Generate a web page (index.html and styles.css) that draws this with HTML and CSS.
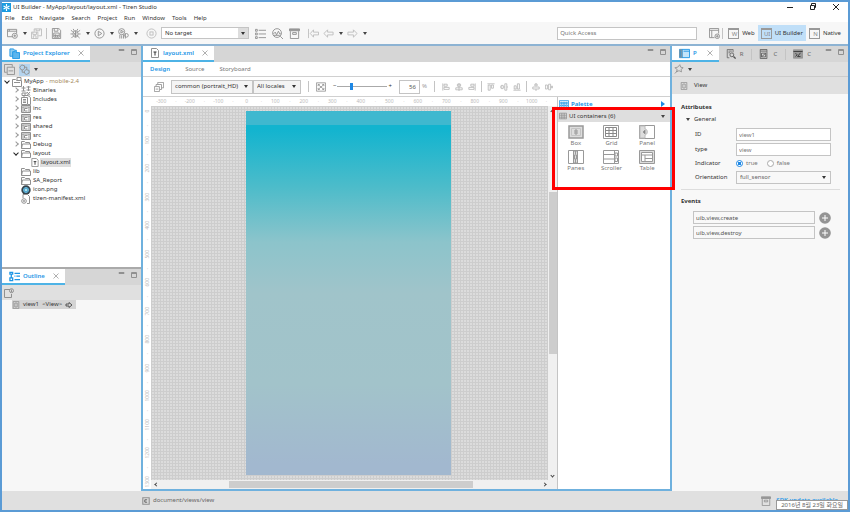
FILE: index.html
```html
<!DOCTYPE html>
<html lang="en">
<head>
<meta charset="utf-8">
<title>UI Builder - MyApp/layout/layout.xml - Tizen Studio</title>
<link rel="stylesheet" href="styles.css">
</head>
<body>
<svg class="sprite" aria-hidden="true">
  <symbol id="logo" viewBox="0 0 9 9"><rect width="9" height="9" fill="#1a9be0"/><path d="M4.5 1v2M4.500 6v2M1.500 3l2 1M5.500 5l2 1M1.500 6l2-1M5.500 4l2-1" stroke="#fff" stroke-width="1.200"/><circle cx="4.500" cy="4.500" r="1.300" fill="#fff"/></symbol>
  <symbol id="new" viewBox="0 0 12 12"><path d="M10.500 6V1.500H.5v8h5M.5 3.500h10M2.500 1.500v2"/><circle cx="8.500" cy="8.500" r="2.800"/><path d="M8.500 7v3M7 8.500h3"/></symbol>
  <symbol id="saveall" viewBox="0 0 12 12"><path d="M.5 4.500h7v7h-7zM2 4.500V7h4V4.500M2.500 11.500v-3h3v3M3.500 4V1h8v7.500H8M5.500 1v2h4V1"/></symbol>
  <symbol id="save" viewBox="0 0 12 12"><path d="M1.500.5h7l2 2v9h-9zM3 5.500h6V10H3zM3.500 .5v3h4v-3M3 8h6M5 10V7M7 10V8"/></symbol>
  <symbol id="bug" viewBox="0 0 12 12"><ellipse cx="6" cy="6.500" rx="2.800" ry="3.600"/><path d="M3 4 1 2.500M3 6.500H.5M3.500 9l-2 2M9 4l2-1.500M9 6.500h2.500M8.500 9l2 2M4.500 3 3.500 1M7.500 3l1-2M3.500 5l5 4M4 8.500 8 4.500M6 3v7"/></symbol>
  <symbol id="run" viewBox="0 0 12 12"><circle cx="6" cy="6" r="5"/><path d="M4.700 3.500v5L8.500 6z"/></symbol>
  <symbol id="profile" viewBox="0 0 12 12"><circle cx="4" cy="4" r="3.300"/><path d="M3.200 2.500v3L6 4zM2 7.500v4M4 8v3.500M6 7v4.500M8 6v5.500"/><circle cx="9.200" cy="8" r="2"/></symbol>
  <symbol id="stop" viewBox="0 0 12 12"><circle cx="6" cy="6" r="5"/><rect x="4.300" y="4.300" width="3.400" height="3.400"/></symbol>
  <symbol id="list" viewBox="0 0 12 12"><path d="M.5 1.500h2v2h-2zM.5 5.500h2v2h-2zM.5 9.500h2v2h-2zM4 2.500h8M4 6.500h8M4 10.500h8"/></symbol>
  <symbol id="analyze" viewBox="0 0 12 12"><circle cx="5.500" cy="5.500" r="4.800"/><path d="m9 9 3 3M1.500 6.500l2-2 1.500 3 2-4 1.500 3H10M1.500 8h7"/></symbol>
  <symbol id="archive" viewBox="0 0 12 12"><path d="M.5 1h11v2H.5z" fill="#999"/><path d="M1.500 3.500v8h9v-8M4 5h4v2H4z"/></symbol>
  <symbol id="left" viewBox="0 0 12 12"><path d="m1 6 4-4v2.500h6v3H5V10z"/></symbol>
  <symbol id="leftbar" viewBox="0 0 12 12"><path d="M.5 1v10M2.500 6l3.500-4v2.500h5.500v3H6V10z"/></symbol>
  <symbol id="right" viewBox="0 0 12 12"><path d="M11 6 7 2v2.500H1v3h6V10z"/></symbol>
  <symbol id="persp" viewBox="0 0 12 12"><path d="M6 10.500H.5v-10h10V6M.5 2.500h10M3 2.500v8"/><circle cx="9" cy="9" r="2.500"/><path d="M9 7.500v3M7.500 9h3"/></symbol>
  <symbol id="explorer" viewBox="0 0 12 12"><path d="M1 1h4l1 1.500h2V9H1z" fill="#8ecbf0" stroke="#1e96e6"/><path d="M4 4h3l1 1h3.500v6.500H4z" fill="#5bb5ee" stroke="#1e96e6"/></symbol>
  <symbol id="close" viewBox="0 0 8 8"><path d="m1.500 1.500 5 5M6.500 1.500l-5 5"/></symbol>
  <symbol id="min" viewBox="0 0 8 8"><path d="M1 1.500h5v1H1z"/></symbol>
  <symbol id="max" viewBox="0 0 8 8"><path d="M1.500 1.500h5v5h-5zM1.500 2.500h5"/></symbol>
  <symbol id="collapse" viewBox="0 0 12 12"><path d="M3 9H.5V.5H9V3M3.500 3.500h8v8h-8zM5 7.500h5"/></symbol>
  <symbol id="link" viewBox="0 0 12 12"><path d="M2 6 .8 3.500 3 1l3 1v3L4 6.500zM3.500 6.500v2.500H6M6 8l1.500-2L11 7v3l-3 1.500L6 10zM8.500 6V3.500H6"/></symbol>
  <symbol id="project" viewBox="0 0 10 10"><path d="M.5 9.500v-7h3l1 1h5v6zM5 3V.5h4V3M2 5.500h6"/></symbol>
  <symbol id="bin" viewBox="0 0 10 10"><path d="M.5 2h4M2.500 0v5M5.500 1h4M7.500 0v5M5.500 4h4M.5 5h4M1 7h3v2.500H1zM6 6l3 3.500M9 6 6 9.500M4 7h2"/></symbol>
  <symbol id="inc" viewBox="0 0 10 10"><path d="M3 2V.5h4l2.500 2v7H7M.5 2.500h6v7h-6zM2 4.500h3M2 6h3M2 7.500h3"/></symbol>
  <symbol id="cfold" viewBox="0 0 10 10"><path d="M.5 1.500h9v7h-9zM.5 3h9M6.500 4.500h-3v2.500h3M2 3v5M8 3v5"/></symbol>
  <symbol id="folder" viewBox="0 0 10 10"><path d="M.5 8.500v-7h3l1 1h4V4M.5 8.500l1-4.500h8v4.500z"/></symbol>
  <symbol id="tfile" viewBox="0 0 10 10"><path d="M1.500.5h5l2 2v7h-7z"/><path d="M3.500 4h3M5 4v3.500" stroke="#333"/></symbol>
  <symbol id="globe" viewBox="0 0 10 10"><circle cx="5" cy="5" r="4.700" fill="#35434c" stroke="none"/><circle cx="5" cy="5" r="2.500" fill="#2585b5" stroke="#6bbce0"/><path d="M3.500 5h3M5 3.500v3" stroke="#dff"/></symbol>
  <symbol id="manifest" viewBox="0 0 10 10"><path d="M2 4V.5h4.500l2 2v7H6"/><circle cx="3" cy="7" r="2.300"/><circle cx="3" cy="7" r=".6"/></symbol>
  <symbol id="outline" viewBox="0 0 12 12"><path d="M1 1.500h3v2H1zM1 7.500h3v3H1zM2.500 4v3M6 2.500h6M6 5.500h1M8 5.500h4M6 9.500h6" stroke="#1e96e6" stroke-width="1.400"/></symbol>
  <symbol id="newview" viewBox="0 0 10 10"><path d="M6 1.500H.5v8h7V6"/><circle cx="7.500" cy="2.700" r="2"/><path d="M7.500 1.500v2.500"/></symbol>
  <symbol id="view" viewBox="0 0 10 10"><path d="M1.500.5h7v9h-7zM3.500 2.500h3v5h-3z"/></symbol>
  <symbol id="arrow" viewBox="0 0 8 8"><path d="M1 3h3V1.500L7 4 4 6.500V5H1z" stroke="#555"/></symbol>
  <symbol id="layers" viewBox="0 0 12 12"><path d="M.5 5.500h6v6h-6zM2.500 5V3h6.500v6H7M4.500 2.500V.5h7V7H9.500M2 8.500h3"/></symbol>
  <symbol id="fit" viewBox="0 0 12 12"><path d="M.5 1h11v10H.5zM2.500 5V3h2M2.500 3l7 6M9.500 7v2h-2M9.500 5V3h-2M9.500 3l-7 6M2.500 7v2h2"/></symbol>
  <symbol id="al" viewBox="0 0 10 10"><path d="M1 .5v9M2.500 1.500h4v2.500h-4zM2.500 5.500H9V8H2.500z"/></symbol>
  <symbol id="ac" viewBox="0 0 10 10"><path d="M3 1.500h4v2.500H3zM1 6h8v2.500H1zM5 0v10"/></symbol>
  <symbol id="ar" viewBox="0 0 10 10"><path d="M9 .5v9M3.500 1.500h4v2.500h-4zM1 5.500h6.500V8H1z"/></symbol>
  <symbol id="at" viewBox="0 0 10 10"><path d="M.5 1h9M1.500 2.500H4V9H1.500zM5.500 2.500H8v4H5.500z"/></symbol>
  <symbol id="am" viewBox="0 0 10 10"><path d="M0 5h1.500M4 5h2M8.500 5H10M1.500 3H4v4H1.500zM6 1h2.500v8H6z"/></symbol>
  <symbol id="ab" viewBox="0 0 10 10"><path d="M.5 9h9M1.500 3.500H4v4H1.500zM5.500 1H8v6.500H5.500z"/></symbol>
  <symbol id="dv" viewBox="0 0 10 10"><path d="M5 0v1.500M3.500 1.500h3v2h-3zM1 5h8v2.500H1zM5 7.500V10"/></symbol>
  <symbol id="dh" viewBox="0 0 10 10"><path d="M.5 2.500H3v5H.5zM4.500 1.500H7v7H4.500zM8 4h1.500v2H8z"/></symbol>
  <symbol id="palette" viewBox="0 0 12 10"><path d="M.5 1h11v8H.5zM2 3h2v1.500H2zM5 3h2v1.500H5zM8 3h2v1.500H8zM2 6h2v1.500H2zM5 6h2v1.500H5zM8 6h2v1.500H8z" stroke="#1e96e6"/></symbol>
  <symbol id="grid" viewBox="0 0 10 10"><path d="M.5 1.500h9v7h-9zM.5 4h9M.5 6.500h9M3.500 1.500v7M6.500 1.500v7"/></symbol>
  <symbol id="w-box" viewBox="0 0 16 14"><path d="M1 1h14v12H1z" fill="#ddd" stroke-width="1.500"/><path d="M3.500 3.500h9v7h-9z" stroke="#c4c4c4"/><path d="M7 5h2v4H7zM7 7h2"/></symbol>
  <symbol id="w-grid" viewBox="0 0 16 14"><path d="M.5.500h15v13H.5z"/><path d="M2.500 2.500h11v9h-11zM6 2.500v9M10 2.500v9M2.500 5.500h11M2.500 8.500h11" stroke="#888"/></symbol>
  <symbol id="w-panel" viewBox="0 0 16 14"><path d="M.5.500h15v13H.5z"/><path d="M1 1h5v3c3 0 3 5.500 0 6v3H1z" fill="#ddd" stroke="#bbb"/><path d="M6 5l-2 2 2 2z" fill="#777"/></symbol>
  <symbol id="w-panes" viewBox="0 0 16 14"><path d="M.5.500h15v13H.5z"/><path d="M5.500 1h4v12h-4z" fill="#ddd"/><path d="M7.500 1v3.500M6.500 5h2v4h-2zM7.500 9v4"/></symbol>
  <symbol id="w-scroller" viewBox="0 0 16 14"><path d="M.5.500h15v13H.5zM.5 4.500h10.500M.5 9h10.500M11.500 1v12"/><path d="M12 3h2.500v3H12zM12 8h2.500v3.500H12z"/></symbol>
  <symbol id="w-table" viewBox="0 0 16 14"><path d="M.5.500h15v13H.5z" fill="#ddd"/><path d="M2.500 2.500h11v9h-11z" fill="#fff"/><path d="M2.500 5h11M6 5v6.500M6 8.500h7.500"/></symbol>
  <symbol id="prop" viewBox="0 0 12 12"><path d="M.5 1.500h11v9H.5zM3.500 1.500v9M5 3.500h6" stroke="#1e96e6" fill="#c3e4fa"/><path d="M1 2h2v8H1z" fill="#1e96e6"/></symbol>
  <symbol id="search" viewBox="0 0 12 12"><path d="M4 10.500H1.500v-10h7V4M3 2.500h4M3 4.500h2" stroke="#666"/><circle cx="7" cy="7" r="2.300" stroke="#555"/><path d="m9 9 2.500 2.500" stroke="#555" stroke-width="1.600"/></symbol>
  <symbol id="check" viewBox="0 0 12 12"><path d="M1.500.5h8v11h-8zM2 2.500h7M3 9.500l5-4.500M3 5h5v4.500H3z" stroke="#555"/></symbol>
  <symbol id="console" viewBox="0 0 12 12"><path d="M.5 1h11v10H.5z" fill="#999"/><path d="M.5 3h11M3 5l2 2-2 2M9 4.500 5.500 9H9" stroke="#333"/></symbol>
  <symbol id="pin" viewBox="0 0 12 12"><path d="m7 .8 1 3 3 .7-2.500 2 .5 3-3-1.500L3 9.500l.8-3L1 4.500l3.500-.7zM4 8l-3 3.500"/></symbol>
  <symbol id="plus" viewBox="0 0 12 12"><circle cx="6" cy="6" r="5.800" fill="#949494" stroke="none"/><path d="M6 3v6M3 6h6" stroke="#fff"/></symbol>
  <symbol id="cbox" viewBox="0 0 10 10"><path d="M1 1h8v8H1z" stroke-width="1.400"/><path d="M6.500 3.500h-3v3h3" stroke="#444"/></symbol>
</svg>

<div class="app">
  <header class="titlebar">
    <svg class="ic logo"><use href="#logo"/></svg>
    <h1>UI Builder - MyApp/layout/layout.xml - Tizen Studio</h1>
    <div class="window-buttons">
      <button aria-label="Minimize"><svg class="ic dark"><path d="M2 5.500h6"/></svg></button>
      <button aria-label="Restore"><svg class="ic dark"><path d="M2.500 3.500h4v4h-4zM3.500 3V1.500h4v4H7"/></svg></button>
      <button aria-label="Close"><svg class="ic dark"><path d="m2 2 6 6M8 2 2 8"/></svg></button>
    </div>
  </header>

  <nav class="menu">
    <a href="#">File</a><a href="#">Edit</a><a href="#">Navigate</a><a href="#">Search</a><a href="#">Project</a><a href="#">Run</a><a href="#">Window</a><a href="#">Tools</a><a href="#">Help</a>
  </nav>

  <div class="toolbar">
    <button aria-label="New"><svg class="ic"><use href="#new"/></svg><i class="caret"></i></button>
    <button aria-label="Save all"><svg class="ic faint"><use href="#saveall"/></svg></button>
    <span class="sep"></span>
    <button aria-label="Save"><svg class="ic"><use href="#save"/></svg></button>
    <button class="wide" aria-label="Debug"><svg class="ic"><use href="#bug"/></svg><i class="caret"></i></button>
    <button aria-label="Run"><svg class="ic"><use href="#run"/></svg><i class="caret"></i></button>
    <button aria-label="Profile"><svg class="ic"><use href="#profile"/></svg><i class="caret"></i></button>
    <button class="wide" aria-label="Stop"><svg class="ic faint"><use href="#stop"/></svg></button>
    <span class="select target"><select aria-label="Target"><option>No target</option></select></span>
    <div class="group">
      <button aria-label="Log"><svg class="ic"><use href="#list"/></svg></button>
      <button aria-label="Analyze"><svg class="ic"><use href="#analyze"/></svg></button>
      <button aria-label="Packages"><svg class="ic"><use href="#archive"/></svg></button>
    </div>
    <button class="wide" aria-label="Last edit"><svg class="ic faint"><use href="#leftbar"/></svg></button>
    <button aria-label="Back"><svg class="ic faint"><use href="#left"/></svg><i class="caret"></i></button>
    <button aria-label="Forward"><svg class="ic faint"><use href="#right"/></svg><i class="caret"></i></button>
    <input class="quick" type="text" placeholder="Quick Access" aria-label="Quick Access">
    <div class="perspectives">
      <button aria-label="Open perspective"><svg class="ic"><use href="#persp"/></svg></button>
      <span class="sep"></span>
      <button class="persp"><span class="badge">W</span>Web</button>
      <button class="persp on"><span class="badge">UI</span>UI Builder</button>
      <button class="persp"><span class="badge">N</span>Native</button>
    </div>
  </div>

  <main class="workbench">
    <aside class="left">
      <section class="explorer">
        <div class="tabs">
          <button class="tab on"><svg class="ic"><use href="#explorer"/></svg><b>Project Explorer</b><svg class="ic s8"><use href="#close"/></svg></button>
          <span class="tab-tools"><svg class="ic s8"><use href="#min"/></svg><svg class="ic s8"><use href="#max"/></svg></span>
        </div>
        <div class="viewbar">
          <button aria-label="Collapse all"><svg class="ic"><use href="#collapse"/></svg></button>
          <button class="pressed" aria-label="Link with editor"><svg class="ic"><use href="#link"/></svg></button>
          <i class="caret"></i>
        </div>
        <ul class="tree">
          <li class="l0"><i class="open"></i><svg class="ic s10"><use href="#project"/></svg>MyApp <em>- mobile-2.4</em></li>
          <li><i class="shut"></i><svg class="ic s10"><use href="#bin"/></svg>Binaries</li>
          <li><i class="shut"></i><svg class="ic s10"><use href="#inc"/></svg>Includes</li>
          <li><i class="shut"></i><svg class="ic s10"><use href="#cfold"/></svg>inc</li>
          <li><i class="shut"></i><svg class="ic s10"><use href="#cfold"/></svg>res</li>
          <li><i class="shut"></i><svg class="ic s10"><use href="#cfold"/></svg>shared</li>
          <li><i class="shut"></i><svg class="ic s10"><use href="#cfold"/></svg>src</li>
          <li><i class="shut"></i><svg class="ic s10"><use href="#folder"/></svg>Debug</li>
          <li><i class="open"></i><svg class="ic s10"><use href="#folder"/></svg>layout</li>
          <li class="l2"><i></i><span class="picked"><svg class="ic s10"><use href="#tfile"/></svg>layout.xml</span></li>
          <li><i></i><svg class="ic s10"><use href="#folder"/></svg>lib</li>
          <li><i></i><svg class="ic s10"><use href="#folder"/></svg>SA_Report</li>
          <li><i></i><svg class="ic s10"><use href="#globe"/></svg>icon.png</li>
          <li><i></i><svg class="ic s10"><use href="#manifest"/></svg>tizen-manifest.xml</li>
        </ul>
      </section>
      <section class="outline">
        <div class="tabs">
          <button class="tab on"><svg class="ic"><use href="#outline"/></svg><b>Outline</b><svg class="ic s8"><use href="#close"/></svg></button>
          <span class="tab-tools"><svg class="ic s8"><use href="#min"/></svg><svg class="ic s8"><use href="#max"/></svg></span>
        </div>
        <div class="viewbar"><button aria-label="New view"><svg class="ic s10"><use href="#newview"/></svg></button></div>
        <div class="outline-body"><span class="node"><svg class="ic s8"><use href="#view"/></svg>view1 &nbsp;&lt;View&gt;<svg class="ic s8"><use href="#arrow"/></svg></span></div>
      </section>
    </aside>

    <section class="editor">
      <div class="tabs">
        <button class="tab on"><svg class="ic s10"><use href="#tfile"/></svg><b>layout.xml</b><svg class="ic s8"><use href="#close"/></svg></button>
        <span class="tab-tools"><svg class="ic s8"><use href="#min"/></svg><svg class="ic s8"><use href="#max"/></svg></span>
      </div>
      <nav class="modes"><a class="on" href="#">Design</a><a href="#">Source</a><a href="#">Storyboard</a></nav>
      <div class="designbar">
        <button aria-label="Views"><svg class="ic s10"><use href="#layers"/></svg></button>
        <div class="pair">
          <span class="select device"><select aria-label="Device"><option>common (portrait_HD)</option></select></span>
          <span class="select locale"><select aria-label="Locale"><option>All locales</option></select></span>
        </div>
        <span class="sep"></span>
        <button aria-label="Fit"><svg class="ic s10"><use href="#fit"/></svg></button>
        <label class="zoom"><span>−</span><input type="range" min="0" max="100" value="26" aria-label="Zoom"><span>+</span></label>
        <label class="percent"><input type="text" value="56" aria-label="Zoom percent"><span>%</span></label>
        <span class="sep"></span>
        <div class="aligns">
          <svg class="ic s8"><use href="#al"/></svg><svg class="ic s8"><use href="#ac"/></svg><svg class="ic s8"><use href="#ar"/></svg><span class="sep"></span><svg class="ic s8"><use href="#at"/></svg><svg class="ic s8"><use href="#am"/></svg><svg class="ic s8"><use href="#ab"/></svg><span class="sep"></span><svg class="ic s8"><use href="#dv"/></svg><svg class="ic s8"><use href="#dh"/></svg>
        </div>
      </div>
      <div class="stage">
        <div class="surface">
          <div class="ruler-x"><span>-300</span><span>-200</span><span>-100</span><span>0</span><span>100</span><span>200</span><span>300</span><span>400</span><span>500</span><span>600</span><span>700</span><span>800</span><span>900</span><span>1000</span></div>
          <div class="ruler-y"><span>0</span><span>100</span><span>200</span><span>300</span><span>400</span><span>500</span><span>600</span><span>700</span><span>800</span><span>900</span><span>1000</span><span>1100</span><span>1200</span><span>1300</span></div>
          <div class="canvas"><div class="phone"><div class="indicator"></div></div></div>
          <div class="vscroll"><i class="up"></i><div class="thumb"></div><i class="down"></i></div>
          <div class="hscroll"><i class="prev"></i><div class="thumb"></div><i class="next"></i></div>
        </div>
        <div class="palette">
          <h2><svg class="ic s10"><use href="#palette"/></svg>Palette<i class="more"></i></h2>
          <h3><svg class="ic s8"><use href="#grid"/></svg>UI containers (6)<i class="caret"></i></h3>
          <div class="widgets">
            <button><svg class="w"><use href="#w-box"/></svg>Box</button>
            <button><svg class="w"><use href="#w-grid"/></svg>Grid</button>
            <button><svg class="w"><use href="#w-panel"/></svg>Panel</button>
            <button><svg class="w"><use href="#w-panes"/></svg>Panes</button>
            <button><svg class="w"><use href="#w-scroller"/></svg>Scroller</button>
            <button><svg class="w"><use href="#w-table"/></svg>Table</button>
          </div>
          <div class="highlight"></div>
        </div>
      </div>
    </section>

    <aside class="properties">
      <div class="tabs">
        <button class="tab on"><svg class="ic"><use href="#prop"/></svg><b>P</b><svg class="ic s8"><use href="#close"/></svg></button>
        <button class="tab"><svg class="ic s10"><use href="#search"/></svg>R</button>
        <span class="sep"></span>
        <button class="tab"><svg class="ic s10"><use href="#check"/></svg>C</button>
        <span class="sep"></span>
        <button class="tab"><svg class="ic s10"><use href="#console"/></svg>C</button>
        <span class="tab-tools"><svg class="ic s8"><use href="#min"/></svg><svg class="ic s8"><use href="#max"/></svg></span>
      </div>
      <div class="viewbar"><button aria-label="Pin"><svg class="ic s10"><use href="#pin"/></svg></button><i class="caret"></i></div>
      <h2 class="subject"><svg class="ic s8"><use href="#view"/></svg>View</h2>
      <div class="props-body">
        <h3>Attributes</h3>
        <h4><i class="caret"></i>General</h4>
        <div class="form">
          <label for="f-id">ID</label><input id="f-id" type="text" value="view1">
          <label for="f-type">type</label><input id="f-type" class="ro" type="text" value="view" readonly>
          <span>Indicator</span>
          <div class="radios"><label><input type="radio" name="ind" checked>true</label><label><input type="radio" name="ind">false</label></div>
          <label for="f-or">Orientation</label><span class="select"><select id="f-or"><option>full_sensor</option></select></span>
        </div>
        <h3 class="events-title">Events</h3>
        <div class="events">
          <input type="text" value="uib,view,create" aria-label="Create event"><button aria-label="Add create handler"><svg class="ic"><use href="#plus"/></svg></button>
          <input type="text" value="uib,view,destroy" aria-label="Destroy event"><button aria-label="Add destroy handler"><svg class="ic"><use href="#plus"/></svg></button>
        </div>
      </div>
    </aside>
  </main>

  <footer class="status">
    <svg class="ic s8"><use href="#cbox"/></svg><span>document/views/view</span>
    <a href="#"><svg class="ic s10"><use href="#archive"/></svg>SDK update available</a>
    <div class="tooltip">2016년 8월 23일 화요일</div>
  </footer>
</div>
</body>
</html>
```
FILE: styles.css
```css
* { box-sizing: border-box; }
body {
  margin: 0;
  font: 6px/9px "Noto Sans", "Noto Sans CJK KR", sans-serif;
  color: #333;
}
h1, h2, h3, h4, ul { margin: 0; padding: 0; font: inherit; }
button, input, select { font: inherit; color: inherit; margin: 0; }
button { border: 0; padding: 0; background: none; display: flex; align-items: center; gap: 5px; }
a { color: inherit; text-decoration: none; }
.sprite { position: absolute; width: 0; height: 0; }
.ic { width: 11px; height: 11px; flex: none; fill: none; stroke: #909090; stroke-width: 1; }
.s10 { width: 10px; height: 10px; }
.s8 { width: 8px; height: 8px; }
.faint { stroke: #bdbdbd; }
.dark { width: 10px; height: 10px; stroke: #222; }
.caret { width: 0; height: 0; flex: none; border: 2px solid transparent; border-top: 3px solid #444; border-bottom: 0; }
.sep { width: 1px; height: 11px; flex: none; background: #c4c4c4; }

.app { min-height: 100vh; display: flex; flex-direction: column; border: 2px solid #5b9bd5; background: #fff; }
.titlebar { display: flex; align-items: center; gap: 2px; height: 10px; }
.titlebar .logo { width: 9px; height: 9px; stroke: none; }
.window-buttons { display: flex; gap: 13px; margin-left: auto; margin-right: 7px; }
.menu { display: flex; gap: 7px; height: 10px; padding: 2px 3px 0; }

.toolbar { display: flex; align-items: center; gap: 4px; height: 22px; padding: 0 4px 0 5px; background: #f7f7f7; }
.toolbar .wide { margin-left: 4px; }
.toolbar .group { display: flex; gap: 6px; margin-left: 2px; }
.select { position: relative; display: block; }
.select select { appearance: none; width: 100%; height: 12px; padding: 0 3px; border: 1px solid #c4c4c4; border-radius: 0; background: #fff; }
.select::after { content: ""; position: absolute; right: 5px; top: 5px; border: 2px solid transparent; border-top: 3px solid #333; border-bottom: 0; }
.target { width: 88px; }
.target::after { right: 4px; }
.target select { background: linear-gradient(to left, #ddd 10px, #fff 10px); }
.quick { width: 140px; height: 13px; margin-left: auto; padding: 0 2px; border: 1px solid #c4c4c4; background: #fff; }
.quick::placeholder { color: #777; }
.perspectives { display: flex; align-items: center; margin-left: 8px; }
.perspectives .sep { margin: 0 2px; }
.toolbar .persp { height: 16px; padding: 0 3px; gap: 3px; }
.persp.on { background: #c0dff8; }
.badge { width: 11px; height: 11px; padding-left: 2px; border: 1px solid #999; border-top-width: 2px; line-height: 8px; color: #888; overflow: hidden; }

.workbench { flex: 1; display: grid; grid-template-columns: 139px minmax(0, 1fr) 176px; border-top: 2px solid #8db3d3; }
.tabs { display: flex; align-items: center; height: 16px; background: #d6d6d6; }
.tab { height: 16px; padding: 0 8px 0 7px; gap: 4px; color: #666; }
.tab.on { padding: 0 5px 0 7px; gap: 3px; background: #fff; border-bottom: 2px solid #4eb3e6; color: #1e96e6; }
.tab b { font-weight: 600; }
.tab .s8 { margin-left: 4px; stroke: #b0b0b0; }
.tab-tools { display: flex; gap: 4px; margin: 0 3px 4px auto; }
.viewbar { display: flex; align-items: center; gap: 4px; height: 15px; padding: 0 2px; background: #e0e0e0; }
.pressed { background: #b5d4ee; height: 12px; }

.left { display: grid; grid-template-rows: 221px 1fr; }
.tree { list-style: none; }
.tree li { display: flex; align-items: center; gap: 2px; height: 9px; padding-left: 12px; }
.tree .l0 { padding-left: 3px; }
.tree .l2 { padding-left: 21px; }
.tree em { font-style: normal; color: #a58a5c; }
.tree i { width: 5px; height: 5px; flex: none; }
.tree .shut::before, .tree .open::before { content: ""; display: block; width: 3px; height: 3px; border: solid #999; border-width: 1px 1px 0 0; transform: rotate(45deg); }
.tree .open::before { border-color: #222; transform: rotate(135deg); }
.picked { display: flex; align-items: center; gap: 1px; background: #dedede; padding-right: 1px; }
.picked .ic { background: #fff; height: 9px; }
.outline { border-top: 2px solid #aaa; display: flex; flex-direction: column; }
.outline-body { flex: 1; background: #f7f7f7; }
.node { display: flex; align-items: center; gap: 3px; width: 64px; height: 9px; margin-left: 10px; background: #d4d4d4; }

.editor { display: flex; flex-direction: column; min-width: 0; border: 2px solid #6fb1de; border-top: 0; }
.modes { display: flex; align-items: center; gap: 15px; height: 15px; padding: 0 7px; border-bottom: 1px solid #d0d0d0; color: #777; }
.modes .on { color: #1e96e6; font-weight: 600; }
.designbar { display: flex; align-items: center; gap: 7px; height: 20px; padding: 0 11px; border-bottom: 1px solid #d0d0d0; }
.pair { display: flex; }
.designbar .select select { height: 14px; background: #f4f4f4; }
.device { width: 82px; }
.locale { width: 48px; }
.zoom { display: flex; align-items: center; gap: 1px; }
.zoom input { appearance: none; width: 50px; height: 8px; background: linear-gradient(#aaa, #aaa) center / 100% 1px no-repeat; }
.zoom input::-webkit-slider-thumb { appearance: none; width: 3px; height: 7px; background: #1e88e5; }
.percent { display: flex; align-items: center; gap: 2px; color: #999; }
.percent input { width: 21px; height: 14px; padding: 0 3px; border: 1px solid #c4c4c4; text-align: right; color: #555; }
.aligns { display: flex; align-items: center; gap: 5px; }
.aligns .ic { stroke: #b4b4b4; }

.stage { flex: 1; display: grid; grid-template-columns: minmax(0, 1fr) 113px; }
.surface { display: grid; grid-template: 9px minmax(0, 1fr) 9px / 8px minmax(0, 1fr) 9px; overflow: hidden; }
.ruler-x, .ruler-y { display: grid; font-size: 5px; color: #bbb; text-align: center; }
.ruler-x { grid-area: 1 / 1 / 2 / 4; grid-template-columns: repeat(14, 1fr); margin: 0 11px 0 4px; line-height: 9px; }
.ruler-x span, .ruler-y span { position: relative; }
.ruler-x span::after { content: "·"; position: absolute; right: -1px; }
.ruler-y { grid-area: 1 / 1 / 4 / 2; grid-template-rows: repeat(14, 1fr); margin-bottom: -7px; line-height: 8px; }
.ruler-y span { writing-mode: vertical-rl; transform: rotate(180deg); }
.ruler-y span::after { content: "·"; position: absolute; top: -1px; }
.canvas { grid-area: 2 / 2; display: flex; justify-content: center; padding: 5px 2px 5px 0; background-color: #dcdcdc; background-image: linear-gradient(#cdcdcd 1px, transparent 1px), linear-gradient(to right, #cdcdcd 1px, transparent 1px); background-size: 3px 3px; }
.phone { width: 205px; background: linear-gradient(#12b4cf 0, #12b4cf 5%, #4dbcca 21%, #8cc4cb 36%, #a0c4ca 50%, #a2c3ca 75%, #a2b8cf 97%); }
.indicator { height: 14px; background: #3fb8cf; }
.vscroll { grid-area: 2 / 3; display: flex; flex-direction: column; align-items: center; background: #f0f0f0; }
.vscroll .thumb { width: 8px; height: 162px; margin-top: 79px; background: #cdcdcd; }
.vscroll i, .hscroll i { width: 3px; height: 3px; flex: none; border: solid #444; border-width: 1px 1px 0 0; }
.up { margin-top: 4px; transform: rotate(-45deg); }
.down { margin: auto 0 3px; transform: rotate(135deg); }
.hscroll { grid-area: 3 / 2 / 4 / 4; display: flex; align-items: center; background: #f0f0f0; }
.hscroll .thumb { width: 244px; height: 7px; margin-left: 71px; background: #cdcdcd; }
.prev { margin-left: 4px; transform: rotate(-135deg); }
.next { margin: 0 11px 0 auto; transform: rotate(45deg); }

.palette { position: relative; border-left: 1px solid #c4c4c4; padding-top: 1px; }
.palette h2, .palette h3 { display: flex; align-items: center; gap: 2px; height: 12px; padding: 0 5px 0 1px; }
.palette h2 { color: #1e96e6; font-weight: 700; }
.palette h3 { background: #dedede; }
.palette h3 .caret { margin-left: auto; }
.more { margin-left: auto; border: 3px solid transparent; border-left: 4px solid #1e88e5; border-right: 0; }
.widgets { display: grid; grid-template-columns: repeat(3, 1fr); row-gap: 2px; padding: 3px 5px 0 0; color: #777; }
.widgets button { flex-direction: column; gap: 0; }
.w { width: 16px; height: 14px; fill: none; stroke: #999; }
.highlight { position: absolute; left: -6px; right: -5px; top: 10px; height: 83px; border: 3px solid #f00; z-index: 1; }

.properties { background: #f8f8f8; }
.properties .tab.on .s8 { margin-left: 6px; }
.properties .viewbar { border-bottom: 1px solid #ccc; }
.subject { display: flex; align-items: center; gap: 6px; height: 17px; padding-left: 8px; background: #e0e0e0; }
.props-body { padding: 8px 8px 8px 9px; }
.props-body h3 { font-weight: 700; line-height: 11px; }
.props-body h4 { display: flex; align-items: center; gap: 4px; height: 12px; padding-left: 5px; }
.form { display: grid; grid-template-columns: 41px 95px; align-items: center; row-gap: 2px; margin: 3px 0 0; padding: 0 0 5px 14px; border-bottom: 1px solid #ddd; }
.form input[type="text"], .events input { width: 100%; height: 13px; padding: 0 2px; border: 1px solid #c4c4c4; background: #fff; color: #777; }
.form .ro { background: #f4f4f4; }
.form .select select { background: #f8f8f8; height: 13px; color: #666; }
.radios { display: flex; gap: 9px; height: 11px; color: #777; }
.radios label { display: flex; align-items: center; gap: 3px; }
.radios input { appearance: none; width: 7px; height: 7px; border: 1px solid #aaa; border-radius: 50%; background: #fff; }
.radios input:checked { border-color: #1e88e5; background: radial-gradient(#1e88e5 45%, #fff 50%); }
.props-body .events-title { margin-top: 6px; }
.events { display: grid; grid-template-columns: 122px 12px; gap: 2px 4px; align-items: center; padding: 4px 0 0 12px; }
.events input { background: #f8f8f8; color: #555; }
.events button .ic { width: 12px; height: 12px; }

.status { position: relative; display: flex; align-items: center; gap: 3px; height: 19px; padding: 0 10px 0 140px; background: #e0e0e0; color: #666; }
.status a { display: flex; align-items: center; gap: 5px; margin-left: auto; color: #1e96e6; font-weight: 600; }
.tooltip { position: absolute; right: 0; bottom: 0; padding: 0 4px; border: 1px solid #999; background: #fff; line-height: 8px; color: #666; }
```
